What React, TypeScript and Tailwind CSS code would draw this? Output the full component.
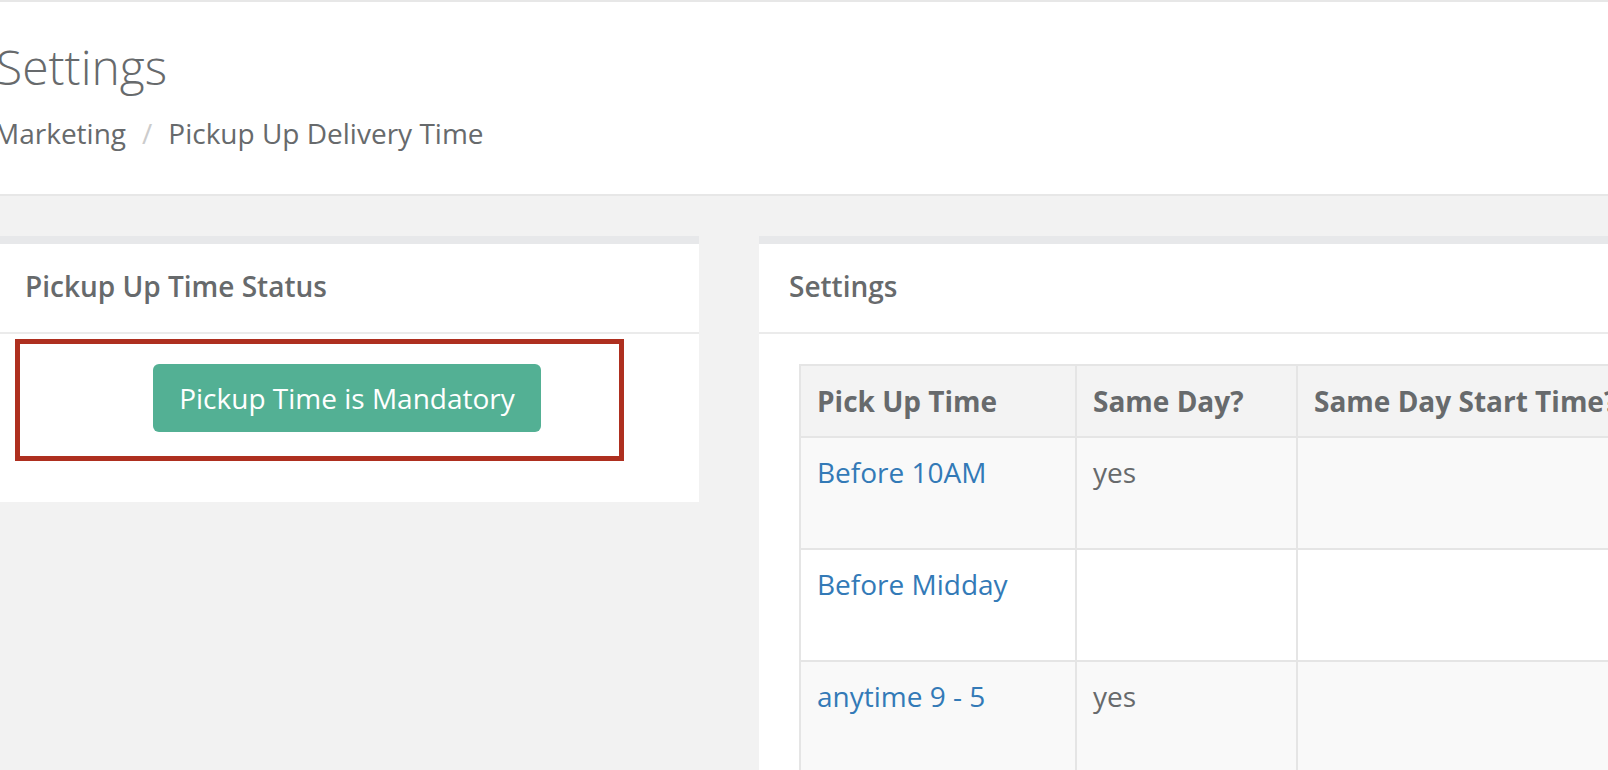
import React from 'react';

const rows = [
  { time: 'Before 10AM', sameDay: 'yes' },
  { time: 'Before Midday', sameDay: '' },
  { time: 'anytime 9 - 5', sameDay: 'yes' },
];

function PanelTitle({ children }: { children: React.ReactNode }) {
  return (
    <div className="h-[90px] border-b-2 border-[#ebebeb] px-[30px] pt-[22px] text-[28px] leading-[40px] font-semibold">
      {children}
    </div>
  );
}

export default function App() {
  return (
    <div className="h-[770px] w-[1608px] overflow-hidden bg-[#f2f2f2] font-['Open_Sans',sans-serif] text-[#676a6c]">
      {/* page heading */}
      <div className="h-[196px] border-t-2 border-b-2 border-[#e7e7e7] bg-white pt-[36px]">
        <h1 className="-ml-[4px] text-[48px] leading-[58px] font-light">Settings</h1>
        <div className="mt-[17px] -ml-[6px] flex text-[28px] leading-[40px]">
          <span>Marketing</span>
          <span className="px-4 text-[#cccccc]">/</span>
          <span>Pickup Up Delivery Time</span>
        </div>
      </div>

      <div className="mt-[40px] flex gap-[60px]">
        {/* status panel */}
        <div className="relative -ml-[5px] w-[704px] shrink-0 self-start border-t-8 border-[#e7e8ea] bg-white">
          <PanelTitle>Pickup Up Time Status</PanelTitle>
          <div className="flex justify-center pt-[30px] pb-[70px]">
            <button className="h-[68px] rounded-md bg-[#53b094] px-[26px] text-[28px] leading-[40px] text-white">
              Pickup Time is Mandatory
            </button>
          </div>
          <div className="pointer-events-none absolute top-[95px] left-[20px] h-[122px] w-[609px] border-[5px] border-[#ae2f1f]" />
        </div>

        {/* settings panel */}
        <div className="w-[1000px] shrink-0 border-t-8 border-[#e7e8ea] bg-white">
          <PanelTitle>Settings</PanelTitle>
          <div className="pt-[30px] pl-[40px]">
            <table className="border-separate border-spacing-0 border-t-2 border-l-2 border-[#e5e5e5] text-left text-[28px] leading-[40px]">
              <thead>
                <tr className="bg-[#f3f3f3]">
                  <th className="h-[72px] w-[276px] border-r-2 border-b-2 border-[#e5e5e5] px-4 align-middle font-bold">
                    Pick Up Time
                  </th>
                  <th className="h-[72px] w-[221px] border-r-2 border-b-2 border-[#e5e5e5] px-4 align-middle font-bold">
                    Same Day?
                  </th>
                  <th className="h-[72px] w-[420px] border-r-2 border-b-2 border-[#e5e5e5] px-4 align-middle font-bold whitespace-nowrap">
                    Same Day Start Time?
                  </th>
                </tr>
              </thead>
              <tbody>
                {rows.map((row, i) => (
                  <tr key={row.time} className={i % 2 === 0 ? 'bg-[#f9f9f9]' : 'bg-white'}>
                    <td className="h-[112px] border-r-2 border-b-2 border-[#e5e5e5] px-4 pt-[14px] align-top">
                      <a className="text-[#337ab7]">{row.time}</a>
                    </td>
                    <td className="h-[112px] border-r-2 border-b-2 border-[#e5e5e5] px-4 pt-[14px] align-top">
                      {row.sameDay}
                    </td>
                    <td className="h-[112px] border-r-2 border-b-2 border-[#e5e5e5] px-4 pt-[14px] align-top" />
                  </tr>
                ))}
              </tbody>
            </table>
          </div>
        </div>
      </div>
    </div>
  );
}
